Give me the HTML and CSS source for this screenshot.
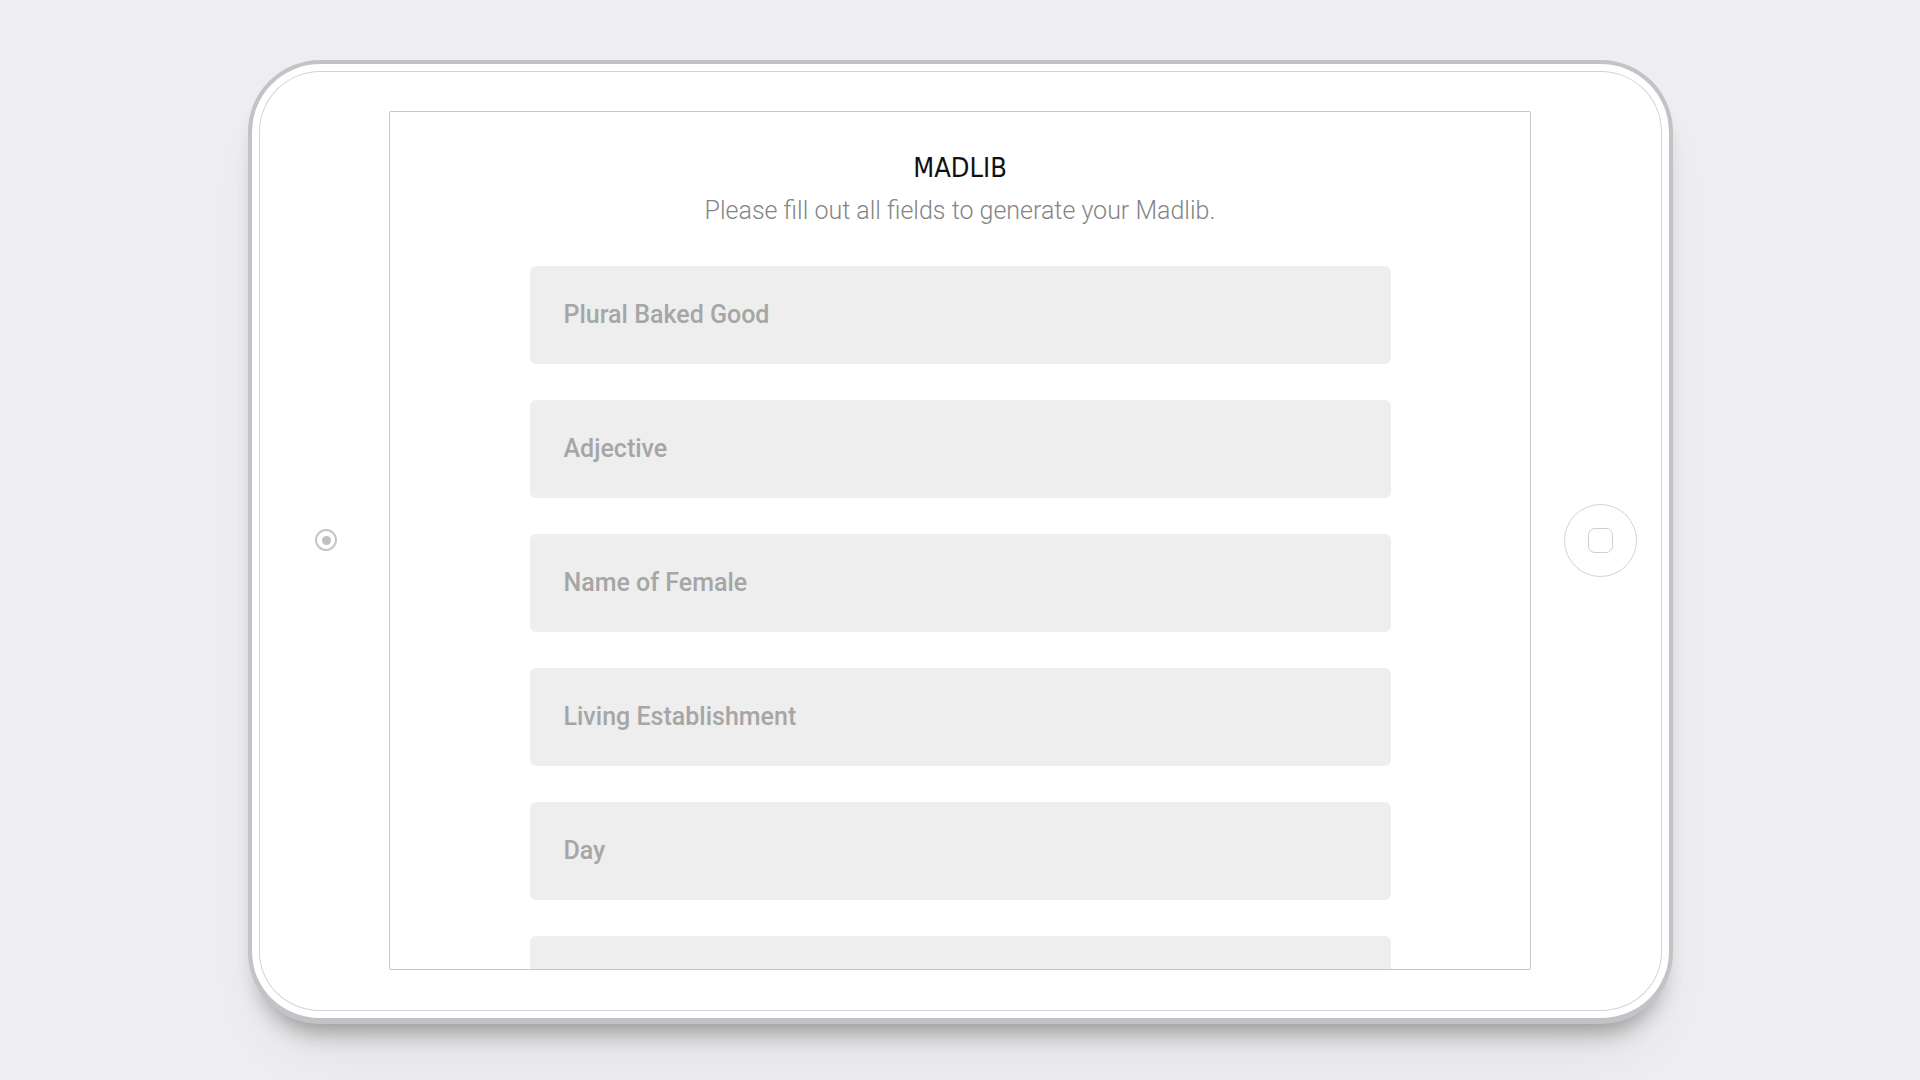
FILE: index.html
```html
<!DOCTYPE html>
<html lang="en">
<head>
<meta charset="utf-8">
<title>Madlib</title>
<link rel="stylesheet" href="styles.css">
</head>
<body>
<div class="stage">
  <div class="device">
    <div class="side side-left">
      <div class="camera"><div class="lens"></div></div>
    </div>
    <div class="screen">
      <h1 class="title">MADLIB</h1>
      <p class="subtitle">Please fill out all fields to generate your Madlib.</p>
      <div class="fields">
        <div class="field">Plural Baked Good</div>
        <div class="field">Adjective</div>
        <div class="field">Name of Female</div>
        <div class="field">Living Establishment</div>
        <div class="field">Day</div>
        <div class="field"></div>
      </div>
    </div>
    <div class="side side-right">
      <div class="home"><div class="home-square"></div></div>
    </div>
  </div>
</div>
</body>
</html>
```
FILE: styles.css
```css
* { box-sizing: border-box; }
html, body { margin: 0; padding: 0; }
body {
  width: 1920px;
  height: 1080px;
  background: #eeeef0;
  overflow: hidden;
  font-family: Roboto, "Liberation Sans", sans-serif;
}
.stage {
  width: 1920px;
  height: 1080px;
  display: flex;
  align-items: center;
  justify-content: center;
  padding-left: 1px;
  padding-top: 3px;
}
.device {
  width: 1425px;
  height: 964px;
  border: 4px solid #c3c3c7;
  border-bottom-width: 6px;
  border-radius: 72px;
  background: #ffffff;
  box-shadow:
    inset 0 0 0 7px #ffffff,
    inset 0 0 0 8px #d3d3d5,
    0 20px 22px -12px rgba(0, 0, 0, 0.32),
    0 40px 60px -20px rgba(0, 0, 0, 0.08);
  display: flex;
  align-items: stretch;
  padding: 47px 0 48px 0;
}
.side {
  display: flex;
  align-items: center;
  justify-content: center;
}
.side-left { width: 137px; padding-left: 11px; }
.side-right { width: 138px; }
.camera {
  width: 22px;
  height: 22px;
  border: 2px solid #c6c6c8;
  border-radius: 50%;
  display: flex;
  align-items: center;
  justify-content: center;
}
.lens {
  width: 9px;
  height: 9px;
  border-radius: 50%;
  background: #c0c0c4;
}
.home {
  width: 73px;
  height: 73px;
  border: 1px solid #d2d2d4;
  border-radius: 50%;
  display: flex;
  align-items: center;
  justify-content: center;
}
.home-square {
  width: 25px;
  height: 25px;
  border: 1px solid #cfcfd1;
  border-radius: 7px;
}
.screen {
  width: 1142px;
  border: 1px solid #c6c6c6;
  border-radius: 2px;
  background: #ffffff;
  overflow: hidden;
  display: flex;
  flex-direction: column;
  align-items: center;
}
.title {
  margin: 39px 0 0 0;
  font-family: "Liberation Sans Narrow", "DejaVu Sans Condensed", sans-serif;
  font-weight: 400;
  font-size: 27px;
  line-height: 34px;
  color: #111111;
}
.subtitle {
  margin: 11px 0 0 0;
  font-family: Roboto, sans-serif;
  font-weight: 300;
  font-size: 25px;
  line-height: 30px;
  color: #858585;
}
.fields {
  margin-top: 40px;
  display: flex;
  flex-direction: column;
  gap: 36px;
}
.field {
  width: 861px;
  height: 98px;
  flex: none;
  background: #eeeeee;
  border-radius: 6px;
  padding-left: 34px;
  display: flex;
  align-items: center;
  font-family: Roboto, sans-serif;
  font-weight: 500;
  font-size: 25px;
  color: #a6a6a6;
}
```
